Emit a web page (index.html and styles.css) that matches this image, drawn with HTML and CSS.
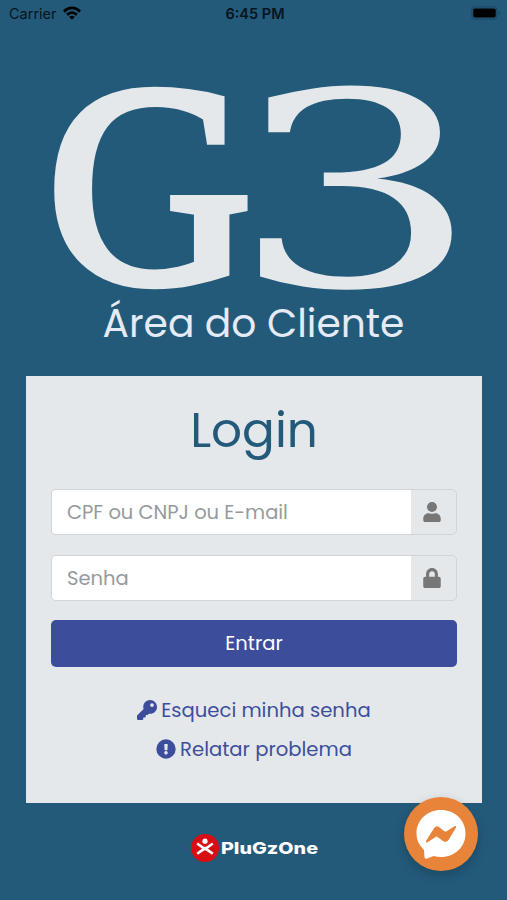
FILE: index.html
```html
<!DOCTYPE html>
<html lang="pt-BR">
<head>
    <meta charset="UTF-8">
    <meta name="viewport" content="width=device-width, initial-scale=1.0">
    <title>G3 - Área do Cliente</title>
    <link rel="stylesheet" href="styles.css">
</head>
<body>
    <div class="status-bar">
        <div class="carrier">
            <span>Carrier</span>
            <svg width="18" height="14" viewBox="0 0 18 14">
                <path d="M0 4.6C5 -1 13 -1 18 4.6L16 6.7C12 2.2 6 2.2 2 6.7ZM3.2 7.8C6.4 4.3 11.6 4.3 14.8 7.8L12.8 9.9C10.6 7.5 7.4 7.5 5.2 9.9ZM6.2 10.9C7.8 9.3 10.2 9.3 11.8 10.9L9 13.8Z"/>
            </svg>
        </div>
        <span class="clock">6:45 PM</span>
        <svg class="battery" width="30" height="14" viewBox="0 0 30 14">
            <rect x="0.8" y="0.8" width="25" height="12.4" rx="3.5" fill="none" stroke="#1b4a66" stroke-width="1.2"/>
            <rect x="2.2" y="2.6" width="22.5" height="8.8" rx="1.6"/>
            <path d="M27.5 5v4c2-.8 2-3.2 0-4z" fill="#1b4a66"/>
        </svg>
    </div>

    <header class="marca">
        <svg class="logo" width="410" height="220" viewBox="0 0 410 220">
            <text class="logo-letra letra-g" x="-2" y="204" textLength="205" lengthAdjust="spacingAndGlyphs">G</text>
            <text class="logo-letra" x="181" y="208" textLength="251" lengthAdjust="spacingAndGlyphs">3</text>
        </svg>
        <h2 class="subtitulo">Área do Cliente</h2>
    </header>

    <main class="cartao">
        <h1 class="titulo">Login</h1>
        <form class="form-login">
            <div class="grupo">
                <input type="text" class="campo" name="login" placeholder="CPF ou CNPJ ou E-mail">
                <span class="icone">
                    <svg width="18" height="20" viewBox="0 0 448 512"><path d="M224 256a128 128 0 1 0 0-256 128 128 0 1 0 0 256zm90 32h-17c-45 20-101 20-146 0h-17C60 288 0 348 0 422v42c0 26 22 48 48 48h352c26 0 48-22 48-48v-42c0-74-60-134-134-134z"/></svg>
                </span>
            </div>
            <div class="grupo">
                <input type="password" class="campo" name="senha" placeholder="Senha">
                <span class="icone">
                    <svg width="18" height="20" viewBox="0 0 448 512"><path d="M400 224h-24v-72C376 68 308 0 224 0S72 68 72 152v72H48c-26 0-48 22-48 48v192c0 26 22 48 48 48h352c26 0 48-22 48-48V272c0-26-22-48-48-48zm-104 0H152v-72c0-40 32-72 72-72s72 32 72 72v72z"/></svg>
                </span>
            </div>
            <button type="button" class="btn-entrar">Entrar</button>
        </form>
        <div class="links">
            <a class="link link-senha" href="#">
                <svg width="20" height="20" viewBox="0 0 512 512"><path d="M512 176c0 97-79 176-176 176-11 0-22-1-33-3l-24 27c-5 5-11 8-18 8h-37v40c0 13-11 24-24 24h-40v40c0 13-11 24-24 24H24c-13 0-24-11-24-24v-78c0-6 3-12 7-17l162-162c-6-17-9-36-9-55C160 79 239 0 336 0s176 79 176 176zM336 128a48 48 0 1 0 96 0 48 48 0 1 0-96 0z"/></svg>
                <span>Esqueci minha senha</span>
            </a>
            <a class="link link-problema" href="#">
                <svg width="20" height="20" viewBox="0 0 512 512"><path fill-rule="evenodd" d="M256 8a248 248 0 1 0 0 496 248 248 0 1 0 0-496zM256 308a46 46 0 1 1 0 92 46 46 0 1 1 0-92zM212 143c0-7 5-13 12-13h64c7 0 12 6 12 13l-8 136c0 6-5 11-12 11h-48c-7 0-12-5-12-11z"/></svg>
                <span>Relatar problema</span>
            </a>
        </div>
    </main>

    <footer class="rodape">
        <svg width="130" height="30" viewBox="0 0 130 30">
            <circle cx="15" cy="15" r="14" fill="#d90d14"/>
            <circle cx="15" cy="8.2" r="2.6" fill="#fff"/>
            <path d="M7.2 10.5L13 14.7Q15 16 17 14.7L22.8 10.500M7.2 20.800L13 16.600Q15 15.300 17 16.600L22.8 20.800" fill="none" stroke="#fff" stroke-width="2.6"/>
            <text class="plugzone" x="31" y="21" textLength="97" lengthAdjust="spacingAndGlyphs">PluGzOne</text>
        </svg>
    </footer>

    <a class="chat" href="#">
        <svg width="74" height="74" viewBox="0 0 74 74">
            <path fill="#fff" d="M37 13C23 13 12.5 23 12.5 36.5C12.5 43 15 48 20 53L20.5 60C20.6 61.5 22 62 23.3 61.4L29.5 59C32 59.7 34.5 60 37 60C51 60 61.5 50 61.5 36.5S51 13 37 13Z"/>
            <path fill="#e8833a" d="M22 44L30 31.3C31.2 29.5 33.6 29 35.3 30.3L40.5 34.3C41.2 34.8 42 34.8 42.6 34.3L50.5 29.2C51.5 28.5 52.6 29.5 52 30.5L44.5 43C43.3 45 40.7 45.4 39 44L33.4 39.9C32.9 39.5 32.2 39.5 31.6 39.9L23.5 45.2C22.5 45.8 21.4 45 22 44Z"/>
        </svg>
    </a>
</body>
</html>
```
FILE: styles.css
```css
* {
    box-sizing: border-box;
}

body {
    margin: 0;
    min-height: 900px;
    background-color: #235a7a;
    font-family: "Poppins", "Inter", "Open Sans", sans-serif;
    font-size: 19.6px;
}

.status-bar {
    display: grid;
    grid-template-columns: 1fr auto 1fr;
    align-items: center;
    height: 26px;
    padding: 0 6px 0 9px;
    font-family: "Inter", sans-serif;
    font-size: 14.5px;
    color: #06141d;
}

.carrier {
    display: flex;
    align-items: center;
    gap: 6px;
}

.clock {
    font-weight: 600;
}

.battery {
    justify-self: end;
}

.marca {
    display: flex;
    flex-direction: column;
    align-items: center;
    padding-top: 52px;
}

.logo {
    display: block;
    overflow: visible;
}

.logo-letra {
    font-family: "DejaVu Serif", serif;
    font-size: 270px;
    fill: #e4e8eb;
}

.letra-g {
    font-family: "Liberation Serif", serif;
    font-size: 288px;
    stroke: #e4e8eb;
    stroke-width: 9px;
}

.subtitulo {
    margin: 0;
    font-size: 39.2px;
    font-weight: 400;
    line-height: 52px;
    color: #e4ebf5;
}

.cartao {
    width: 456px;
    height: 427px;
    margin: 26px 0 0 26px;
    padding: 24px 25px 0;
    background-color: #e4e8eb;
}

.titulo {
    margin: 0 0 29px;
    font-size: 48.5px;
    font-weight: 400;
    line-height: 60px;
    text-align: center;
    color: #235a7a;
}

.form-login {
    display: flex;
    flex-direction: column;
    gap: 20px;
}

.grupo {
    display: flex;
    height: 46px;
    border: 1px solid #d0d5d9;
    border-radius: 5px;
    overflow: hidden;
}

.campo {
    flex: 1;
    min-width: 0;
    padding: 0 15px;
    border: 0;
    outline: 0;
    background-color: #fff;
    font-family: inherit;
    font-size: 19.5px;
}

.campo::placeholder {
    color: #969a9d;
    opacity: 1;
}

.icone {
    display: flex;
    align-items: center;
    justify-content: center;
    width: 45px;
    padding-right: 3px;
    fill: #777;
}

.btn-entrar {
    height: 47px;
    margin-top: -1px;
    padding: 0 0 1px;
    border: 0;
    border-radius: 5px;
    background-color: #3c4e9b;
    font-family: inherit;
    font-size: 19.5px;
    color: #fff;
}

.links {
    display: flex;
    flex-direction: column;
    align-items: center;
    gap: 9px;
    padding-top: 28px;
}

.link {
    display: flex;
    align-items: center;
    gap: 4px;
    line-height: 30px;
    color: #3c4e9b;
    fill: #3c4e9b;
    text-decoration: none;
}

.rodape {
    display: flex;
    justify-content: center;
    padding: 30px 0 0 2px;
}

.plugzone {
    font-family: "Inter", sans-serif;
    font-size: 16.5px;
    font-weight: 800;
    fill: #fff;
}

.chat {
    position: fixed;
    right: 29px;
    bottom: 29px;
    width: 74px;
    height: 74px;
    border-radius: 50%;
    background-color: #e8833a;
    box-shadow: 0 4px 12px rgba(0, 0, 0, 0.2);
}
```
